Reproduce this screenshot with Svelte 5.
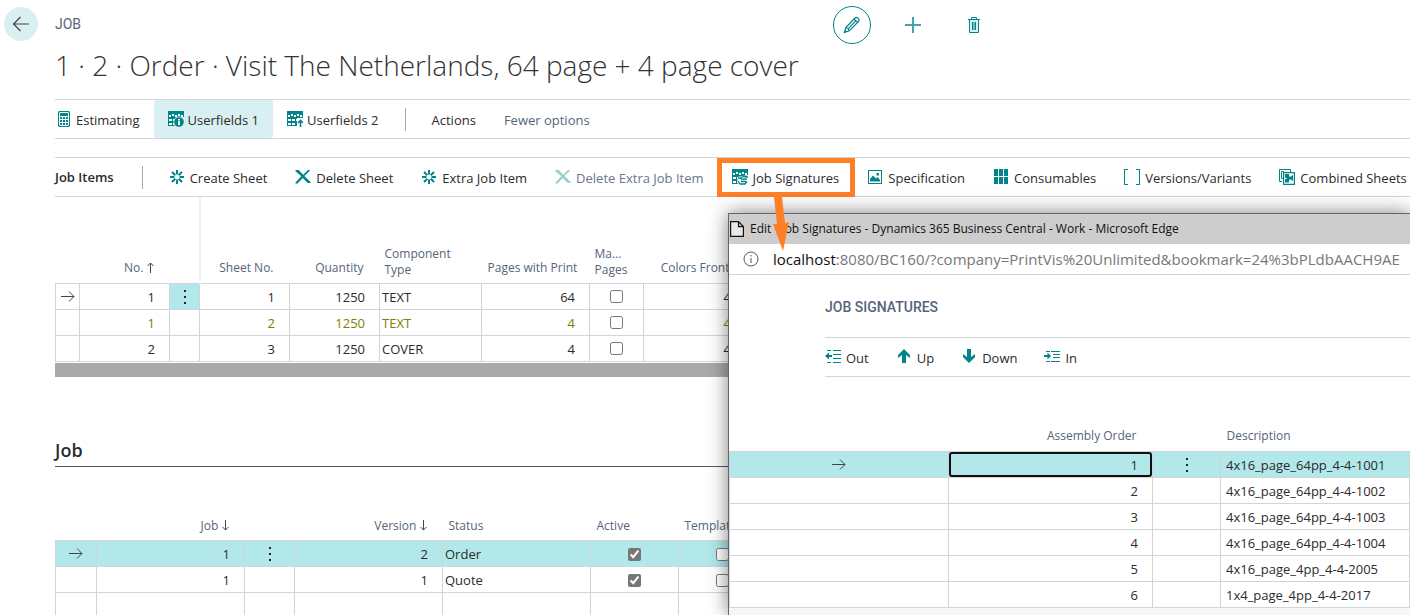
<script>
  const pageActions = [
    { label: 'Estimating', icon: 'calc' },
    { label: 'Userfields 1', icon: 'gridInfo', active: true },
    { label: 'Userfields 2', icon: 'gridUp' }
  ];
  const itemActions = [
    { label: 'Create Sheet', icon: 'spark' },
    { label: 'Delete Sheet', icon: 'cross' },
    { label: 'Extra Job Item', icon: 'spark' },
    { label: 'Delete Extra Job Item', icon: 'cross', disabled: true },
    { label: 'Job Signatures', icon: 'gridEdit', marked: true },
    { label: 'Specification', icon: 'image' },
    { label: 'Consumables', icon: 'blocks' },
    { label: 'Versions/Variants', icon: 'brackets' },
    { label: 'Combined Sheets', icon: 'sheets' }
  ];
  const moveActions = [
    { label: 'Out', icon: 'out' },
    { label: 'Up', icon: 'up' },
    { label: 'Down', icon: 'down' },
    { label: 'In', icon: 'in' }
  ];
  const items = [
    { no: 1, sheet: 1, qty: 1250, type: 'TEXT', pages: 64, colors: 4, current: true },
    { no: 1, sheet: 2, qty: 1250, type: 'TEXT', pages: 4, colors: 4, muted: true },
    { no: 2, sheet: 3, qty: 1250, type: 'COVER', pages: 4, colors: 4 }
  ];
  const jobs = [
    { job: 1, version: 2, status: 'Order', current: true },
    { job: 1, version: 1, status: 'Quote' }
  ];
  const signatures = [
    '4x16_page_64pp_4-4-1001',
    '4x16_page_64pp_4-4-1002',
    '4x16_page_64pp_4-4-1003',
    '4x16_page_64pp_4-4-1004',
    '4x16_page_4pp_4-4-2005',
    '1x4_page_4pp_4-4-2017'
  ];
</script>

{#snippet icon(name)}
  <svg class="icon" width="16" height="16" viewBox="0 0 16 16" fill="none" stroke="none" aria-hidden="true">
    {#if name === 'calc'}
      <path fill="#008489" fill-rule="evenodd" d="M3 0h10l1 1v14l-1 1H3l-1-1V1zM4 1L3 2v12l1 1h8l1-1V2l-1-1z" />
      <path fill="#008489" d="M4 2h8v3H4zM4 6h2v2H4zM7 6h2v2H7zM10 6h2v2h-2zM4 9h2v2H4zM7 9h2v2H7zM10 9h2v2h-2zM4 12h2v2H4zM7 12h2v2H7zM10 12h2v2h-2z" />
    {:else if name === 'gridInfo' || name === 'gridUp' || name === 'gridEdit'}
      <path fill="#008489" d="M0 0h16v15H0z" />
      <path fill="#fff" d="M1 4h2v2H1zM4 3h2v2H4zM7 4h2v2H7zM10 3h2v2h-2zM13 4h2v2h-2zM1 8h3v2H1zM5 8h3v2H5zM9 8h3v2H9zM13 8h2v2h-2zM1 12h3v2H1zM5 12h3v2H5z" />
      {#if name === 'gridInfo'}
        <path fill="#d9f0f2" d="M8 6h8v10H8z" />
        <circle cx="11" cy="11" r="5.600" fill="#d9f0f2" />
        <circle cx="11" cy="11" r="4.800" fill="#008489" />
        <path fill="#fff" d="M10 8h2v1.400h-2zM10 10.300h2V14h-2z" />
      {:else if name === 'gridUp'}
        <path fill="#fff" d="M10 7h6v9h-6z" />
        <path stroke="#008489" stroke-width="1.600" d="M13.500 16V9.500M11 12l2.500-2.500L16 12" />
      {:else}
        <path fill="#fff" d="M5 8l11-2v10H6z" />
        <path stroke="#008489" stroke-width="1.300" d="M6 9h3l1.500 2M9 8.500l3-1 4 .500M11 10h4M6 12l2 3h5l2-2.500M9 12.500h5" />
      {/if}
    {:else if name === 'spark'}
      <path stroke="#008489" stroke-width="2" d="M8 1v4.500M8 10.500V15M1 8h4.500M10.500 8H15M3 3l3.300 3.300M9.700 9.700L13 13M13 3L9.700 6.300M6.300 9.700L3 13" />
    {:else if name === 'cross'}
      <path fill="#008489" d="M.5 1h3.200l4.500 4.800L13 1h1.800v.8L9.400 7l6.200 6v1h-2.800L7.800 9 2.500 14.500H.5v-1L6.300 7.300.5 2.200z" />
    {:else if name === 'image'}
      <path fill="#008489" fill-rule="evenodd" d="M1 1h14v14H1zM2 2v12h12V2z" />
      <path fill="#008489" d="M3 12.500V10l3-3.500 3 3 1.500-1.500 2.500 3v1.500zM9.500 4h2.500v2.500H9.500z" />
    {:else if name === 'blocks'}
      <path fill="#008489" d="M1 0h4v7H1zM6 0h4v7H6zM11 0h4v7h-4zM1 8h4v7H1zM6 8h4v7H6zM11 8h4v7h-4z" />
    {:else if name === 'brackets'}
      <path fill="#008489" d="M0 0h4v1H1v14h3v1H0zM12 0h4v16h-4v-1h3V1h-3z" />
    {:else if name === 'sheets'}
      <path stroke="#008489" d="M3 12.500H.5V.5h11V3M5 9.500H2.500v-7H5" />
      <path stroke="#008489" fill="#fff" stroke-width="1.200" d="M4.600 3.600h10.800v11.800H4.600z" />
      <path fill="#008489" d="M6 5h4v2l1 1 3-2v6l-3-2-1 2v1.500H6v-3l2-1-2-1z" />
    {:else if name === 'out'}
      <path fill="#008489" d="M2 1h4v1H2zM8 1h8v1H8zM8 5h8v1H8zM8 9h8v1H8zM2 13h4v1H2zM8 13h8v1H8zM0 7l4-3.500V6h3v2H4v2.500z" />
    {:else if name === 'in'}
      <path fill="#008489" d="M2 2h4v1H2zM7 2h9v1H7zM9 5h7v1H9zM9 8h7v1H9zM2 12h4v1H2zM7 12h9v1H7zM7 7L3.500 3.500V6H0v2h3.500v2.500z" />
    {:else if name === 'up'}
      <path fill="#008489" d="M8 0l6 6v3l-4-3v8H6V6L2 9V6z" />
    {:else if name === 'down'}
      <path fill="#008489" d="M8 14l6-6V5l-4 3V0H6v8L2 5v3z" />
    {/if}
  </svg>
{/snippet}

{#snippet rowArrow()}
  <svg class="mid" width="14" height="12" viewBox="0 0 14 12" fill="none" stroke="#444" aria-hidden="true"><path d="M0 5.500h13M8 .5l5 5-5 5" /></svg>
{/snippet}

{#snippet dots()}
  <button class="dots" aria-label="Show more options">
    <svg width="2" height="14" viewBox="0 0 2 14" fill="#222" aria-hidden="true"><path d="M0 0h2v2H0zM0 6h2v2H0zM0 12h2v2H0z" /></svg>
  </button>
{/snippet}

{#snippet sortMark(up)}
  <svg class="sort" width="7" height="11" viewBox="0 0 7 11" fill="none" stroke="#444" aria-hidden="true">
    <path d={up ? 'M3.500 11V1M.5 4l3-3 3 3' : 'M3.500 0v10M.5 7l3 3 3-3'} />
  </svg>
{/snippet}

<div class="page">
  <header>
    <button class="back" aria-label="Back">
      <svg width="18" height="16" viewBox="0 0 18 16" fill="none" stroke="#444" stroke-width="1.200" aria-hidden="true"><path d="M17 8H1.500M8.500 1l-7 7 7 7" /></svg>
    </button>
    <span class="caption">JOB</span>
    <div class="tools">
      <button class="edit" aria-label="Edit">
        <svg width="18" height="18" viewBox="0 0 18 18" fill="none" stroke="#008489" stroke-width="1.200" aria-hidden="true">
          <path d="M1.500 16.500l1.300-5L12 2q1.500-1.300 3.200.3 1.600 1.700.3 3.200l-9.300 9.300zM3 11.500q2.500.5 3.200 3.200M5.500 12.300l7-7.200M11 3l3.500 3.500M1.500 16.500l2-.7-1.300-1.200z" />
        </svg>
      </button>
      <button aria-label="New">
        <svg width="16" height="16" viewBox="0 0 16 16" fill="none" stroke="#3fa5a9" stroke-width="2" aria-hidden="true"><path d="M8 0v16M0 8h16" /></svg>
      </button>
      <button aria-label="Delete">
        <svg width="14" height="16" viewBox="0 0 14 16" fill="none" stroke="#008489" aria-hidden="true">
          <path fill="#d9f0f2" d="M2.500 2.500h9v13h-9z" /><path d="M1 2.500h12M4.500 2V.5h5V2M5.500 5v8M7 5v8M8.500 5v8" />
        </svg>
      </button>
    </div>
  </header>

  <main>
    <h1>1 · 2 · Order · Visit The Netherlands, 64 page + 4 page cover</h1>

    <nav class="bar top" aria-label="Page actions">
      {#each pageActions as a}
        <button class:active={a.active}>{@render icon(a.icon)}{a.label}</button>
      {/each}
      <i class="sep"></i>
      <button>Actions</button>
      <button class="soft">Fewer options</button>
    </nav>

    <section>
      <div class="bar items">
        <h2>Job Items</h2>
        <i class="sep"></i>
        {#each itemActions as a}
          <button class:marked={a.marked} disabled={a.disabled}>{@render icon(a.icon)}{a.label}</button>
        {/each}
      </div>
      <table class="grid item-grid">
        <colgroup>
          <col style="width:24px" /><col style="width:90px" /><col style="width:30px" /><col style="width:90px" /><col style="width:90px" /><col style="width:102px" /><col style="width:108px" /><col style="width:54px" /><col style="width:102px" /><col />
        </colgroup>
        <thead>
          <tr>
            <th></th><th class="num">No. {@render sortMark(true)}</th><th class="freeze"></th>
            <th class="num">Sheet No.</th><th class="num">Quantity</th><th class="two">Component Type</th>
            <th class="num">Pages with Print</th><th class="two">Ma... Pages</th><th class="num">Colors Front</th><th></th>
          </tr>
        </thead>
        <tbody>
          {#each items as r}
            <tr class:muted={r.muted}>
              <td class="c">{#if r.current}{@render rowArrow()}{/if}</td>
              <td class="num">{r.no}</td>
              <td class="c" class:lit={r.current}>{#if r.current}{@render dots()}{/if}</td>
              <td class="num">{r.sheet}</td><td class="num">{r.qty}</td><td>{r.type}</td>
              <td class="num">{r.pages}</td>
              <td class="c"><input type="checkbox" aria-label="Manual pages" /></td>
              <td class="num">{r.colors}</td><td></td>
            </tr>
          {/each}
        </tbody>
      </table>
      <div class="scroll"></div>
    </section>

    <section class="jobs">
      <h2>Job</h2>
      <table class="grid job-grid">
        <colgroup>
          <col style="width:41px" /><col style="width:148px" /><col style="width:50px" /><col style="width:148px" /><col style="width:148px" /><col style="width:88px" /><col style="width:88px" /><col />
        </colgroup>
        <thead>
          <tr>
            <th></th><th class="num">Job {@render sortMark(false)}</th><th></th><th class="num">Version {@render sortMark(false)}</th>
            <th>Status</th><th>Active</th><th>Template</th><th></th>
          </tr>
        </thead>
        <tbody>
          {#each jobs as r}
            <tr class:lit={r.current}>
              <td class="c">{#if r.current}{@render rowArrow()}{/if}</td>
              <td class="num">{r.job}</td>
              <td class="c">{#if r.current}{@render dots()}{/if}</td>
              <td class="num">{r.version}</td><td>{r.status}</td>
              <td class="c"><input type="checkbox" checked aria-label="Active" /></td>
              <td class="c"><input type="checkbox" aria-label="Template" /></td><td></td>
            </tr>
          {/each}
          <tr><td></td><td></td><td></td><td></td><td></td><td></td><td></td><td></td></tr>
        </tbody>
      </table>
    </section>
  </main>

  <aside class="window" aria-label="Job Signatures">
    <div class="title">
      <svg width="14" height="16" viewBox="0 0 14 16" fill="#e8e8e8" stroke="#111" stroke-width="1.200" aria-hidden="true"><path d="M.6.6h7.900l4.900 5v9.800H.6zM8.500.6v5h4.900" /></svg>
      <span>Edit - Job Signatures - Dynamics 365 Business Central - Work - Microsoft Edge</span>
    </div>
    <div class="url">
      <svg width="16" height="16" viewBox="0 0 16 16" fill="none" stroke="#555" aria-hidden="true"><circle cx="8" cy="8" r="7" /><path d="M8 7v5M8 4v1.500" /></svg>
      <span><b>localhost</b>:8080/BC160/?company=PrintVis%20Unlimited&amp;bookmark=24%3bPLdbAACH9AE</span>
    </div>
    <div class="content">
      <span class="caption">JOB SIGNATURES</span>
      <div class="bar moves">
        {#each moveActions as a}
          <button>{@render icon(a.icon)}{a.label}</button>
        {/each}
      </div>
    </div>
    <table class="grid sig-grid">
      <colgroup>
        <col style="width:219px" /><col style="width:204px" /><col style="width:68px" /><col />
      </colgroup>
      <thead>
        <tr><th></th><th class="num">Assembly Order</th><th></th><th>Description</th></tr>
      </thead>
      <tbody>
        {#each signatures as s, i}
          <tr class:lit={i === 0}>
            <td class="c">{#if i === 0}{@render rowArrow()}{/if}</td>
            {#if i === 0}
              <td class="cell"><input class="order" type="text" value="1" aria-label="Assembly Order" /></td>
            {:else}
              <td class="num">{i + 1}</td>
            {/if}
            <td class="c">{#if i === 0}{@render dots()}{/if}</td>
            <td class="text">{s}</td>
          </tr>
        {/each}
      </tbody>
    </table>
    <div class="foot"></div>
  </aside>

  <svg class="pointer" width="20" height="56" viewBox="0 0 20 56" fill="#ff7f27" aria-hidden="true"><path d="M4 0h8l3 26 4-1-6 29L3 27l4 0z" /></svg>
</div>

<style>
  :global(body) {
    margin: 0;
    background: #fff;
    color: #2b2b2b;
    font: 13px/18px "Open Sans", "Noto Sans", sans-serif;
  }
  .page {
    position: relative;
    height: 100vh;
    overflow: hidden;
  }
  button {
    display: flex;
    align-items: center;
    gap: 4px;
    margin: 0;
    padding: 0;
    border: 0;
    background: none;
    color: inherit;
    font: inherit;
    white-space: nowrap;
  }
  svg { flex: none; }
  header {
    display: grid;
    grid-template-columns: 34px auto 1fr;
    align-items: center;
    gap: 17px;
    height: 48px;
    padding-left: 4px;
  }
  .back {
    justify-content: center;
    width: 34px;
    height: 34px;
    border-radius: 50%;
    background: #d9f0f2;
  }
  .caption {
    color: #56657a;
    font: 14px/18px Roboto, sans-serif;
  }
  .tools {
    display: flex;
    align-items: center;
    justify-content: flex-end;
    gap: 23px;
    padding: 2px 417px 0 0;
  }
  .tools button {
    box-sizing: border-box;
    justify-content: center;
    width: 38px;
    height: 38px;
  }
  .tools .edit {
    border: 1px solid #008489;
    border-radius: 50%;
  }
  main { padding-left: 55px; }
  h1 {
    margin: 0 0 16px;
    color: #333;
    font: 300 28px/35px "Open Sans", sans-serif;
    white-space: nowrap;
  }
  .bar {
    display: flex;
    align-items: center;
    height: 38px;
    border: solid #d2d5d8;
    border-width: 1px 0;
    white-space: nowrap;
  }
  .bar button {
    gap: 5px;
    padding-top: 2px;
  }
  .bar .icon { margin-bottom: 2px; }
  .sep {
    width: 1px;
    height: 23px;
    background: #a0a8b3;
  }
  .bar.top button {
    box-sizing: border-box;
    gap: 4px;
    height: 38px;
    padding: 2px 14px 0;
  }
  .bar.top button:first-child { padding-left: 1px; }
  .top .active {
    border-radius: 2px;
    background: #d9f0f2;
  }
  .top .sep { margin: 0 12px; }
  .soft { color: #56657a; }
  .items {
    gap: 28px;
    margin-top: 18px;
  }
  .items h2 {
    margin: 0;
    font: 600 13px/18px "Open Sans", sans-serif;
  }
  .items .sep { margin-right: -2px; }
  button:disabled { color: #6b7787; }
  button:disabled .icon { opacity: .4; }
  .marked { position: relative; }
  .marked::after {
    position: absolute;
    inset: -9px -16px -10px -15px;
    border: 5px solid #ff7f27;
    content: "";
  }
  .grid {
    width: 100%;
    border-collapse: collapse;
    table-layout: fixed;
  }
  th {
    padding: 0 6px 6px;
    color: #56657a;
    font-size: 12px;
    font-weight: 400;
    line-height: 18px;
    text-align: left;
    vertical-align: bottom;
    white-space: nowrap;
  }
  th.two {
    padding: 0 5px 5px;
    line-height: 16px;
    white-space: normal;
  }
  th.num { padding-right: 16px; }
  th.freeze { border-right: 2px solid #f2f3f4; }
  td {
    box-sizing: border-box;
    height: 26px;
    padding: 1px 2px 0;
    border: 1px solid #d2d5d8;
    white-space: nowrap;
  }
  .num { text-align: right; }
  td.num { padding-right: 14px; }
  td.c { text-align: center; }
  td.text { padding-left: 5px; }
  .lit { background: #b2e8ea; }
  .muted { color: #808000; }
  .item-grid thead { height: 86px; }
  .job-grid thead { height: 74px; }
  .job-grid th { padding-bottom: 5px; }
  .sig-grid thead { height: 74px; }
  .mid, .c input { display: block; margin: 0 auto; }
  .dots { justify-content: center; width: 100%; }
  .sort { vertical-align: -1px; }
  input[type="checkbox"] {
    width: 13px;
    height: 13px;
    accent-color: #767676;
  }
  .scroll {
    height: 14px;
    margin-top: 1px;
    background: #a9a9a9;
  }
  .jobs h2 {
    margin: 60px 0 0;
    padding-bottom: 3px;
    border-bottom: 1px solid #505c6d;
    font: 600 18px/26px "Open Sans", sans-serif;
  }
  .window {
    position: absolute;
    inset: 213px 0 0 728px;
    overflow: hidden;
    border: solid #666;
    border-width: 1px 0 0 1px;
    background: #fff;
    box-shadow: 0 0 18px rgba(0, 0, 0, .5);
  }
  .title {
    display: flex;
    align-items: center;
    gap: 6px;
    height: 30px;
    padding-left: 1px;
    background: #cdcdcd;
    color: #111;
    font-size: 12px;
    white-space: nowrap;
  }
  .url {
    display: flex;
    align-items: center;
    gap: 14px;
    height: 30px;
    padding-left: 14px;
    border-bottom: 1px solid #d2d5d8;
    color: #777;
    font-size: 15px;
    white-space: nowrap;
  }
  .url b { color: #111; font-weight: 400; }
  .content { padding: 23px 0 0 96px; }
  .content .caption {
    display: block;
    font-weight: 500;
  }
  .moves {
    gap: 27px;
    margin-top: 21px;
  }
  .sig-grid .cell { padding: 0; }
  .order {
    box-sizing: border-box;
    display: block;
    width: 100%;
    height: 25px;
    margin: 0;
    padding: 1px 12px 0;
    border: 2px solid #111;
    border-radius: 3px;
    background: none;
    color: inherit;
    font: inherit;
    text-align: right;
  }
  .foot {
    height: 20px;
    background: #f5f6f8;
  }
  .pointer {
    position: absolute;
    top: 197px;
    left: 770px;
  }
</style>
